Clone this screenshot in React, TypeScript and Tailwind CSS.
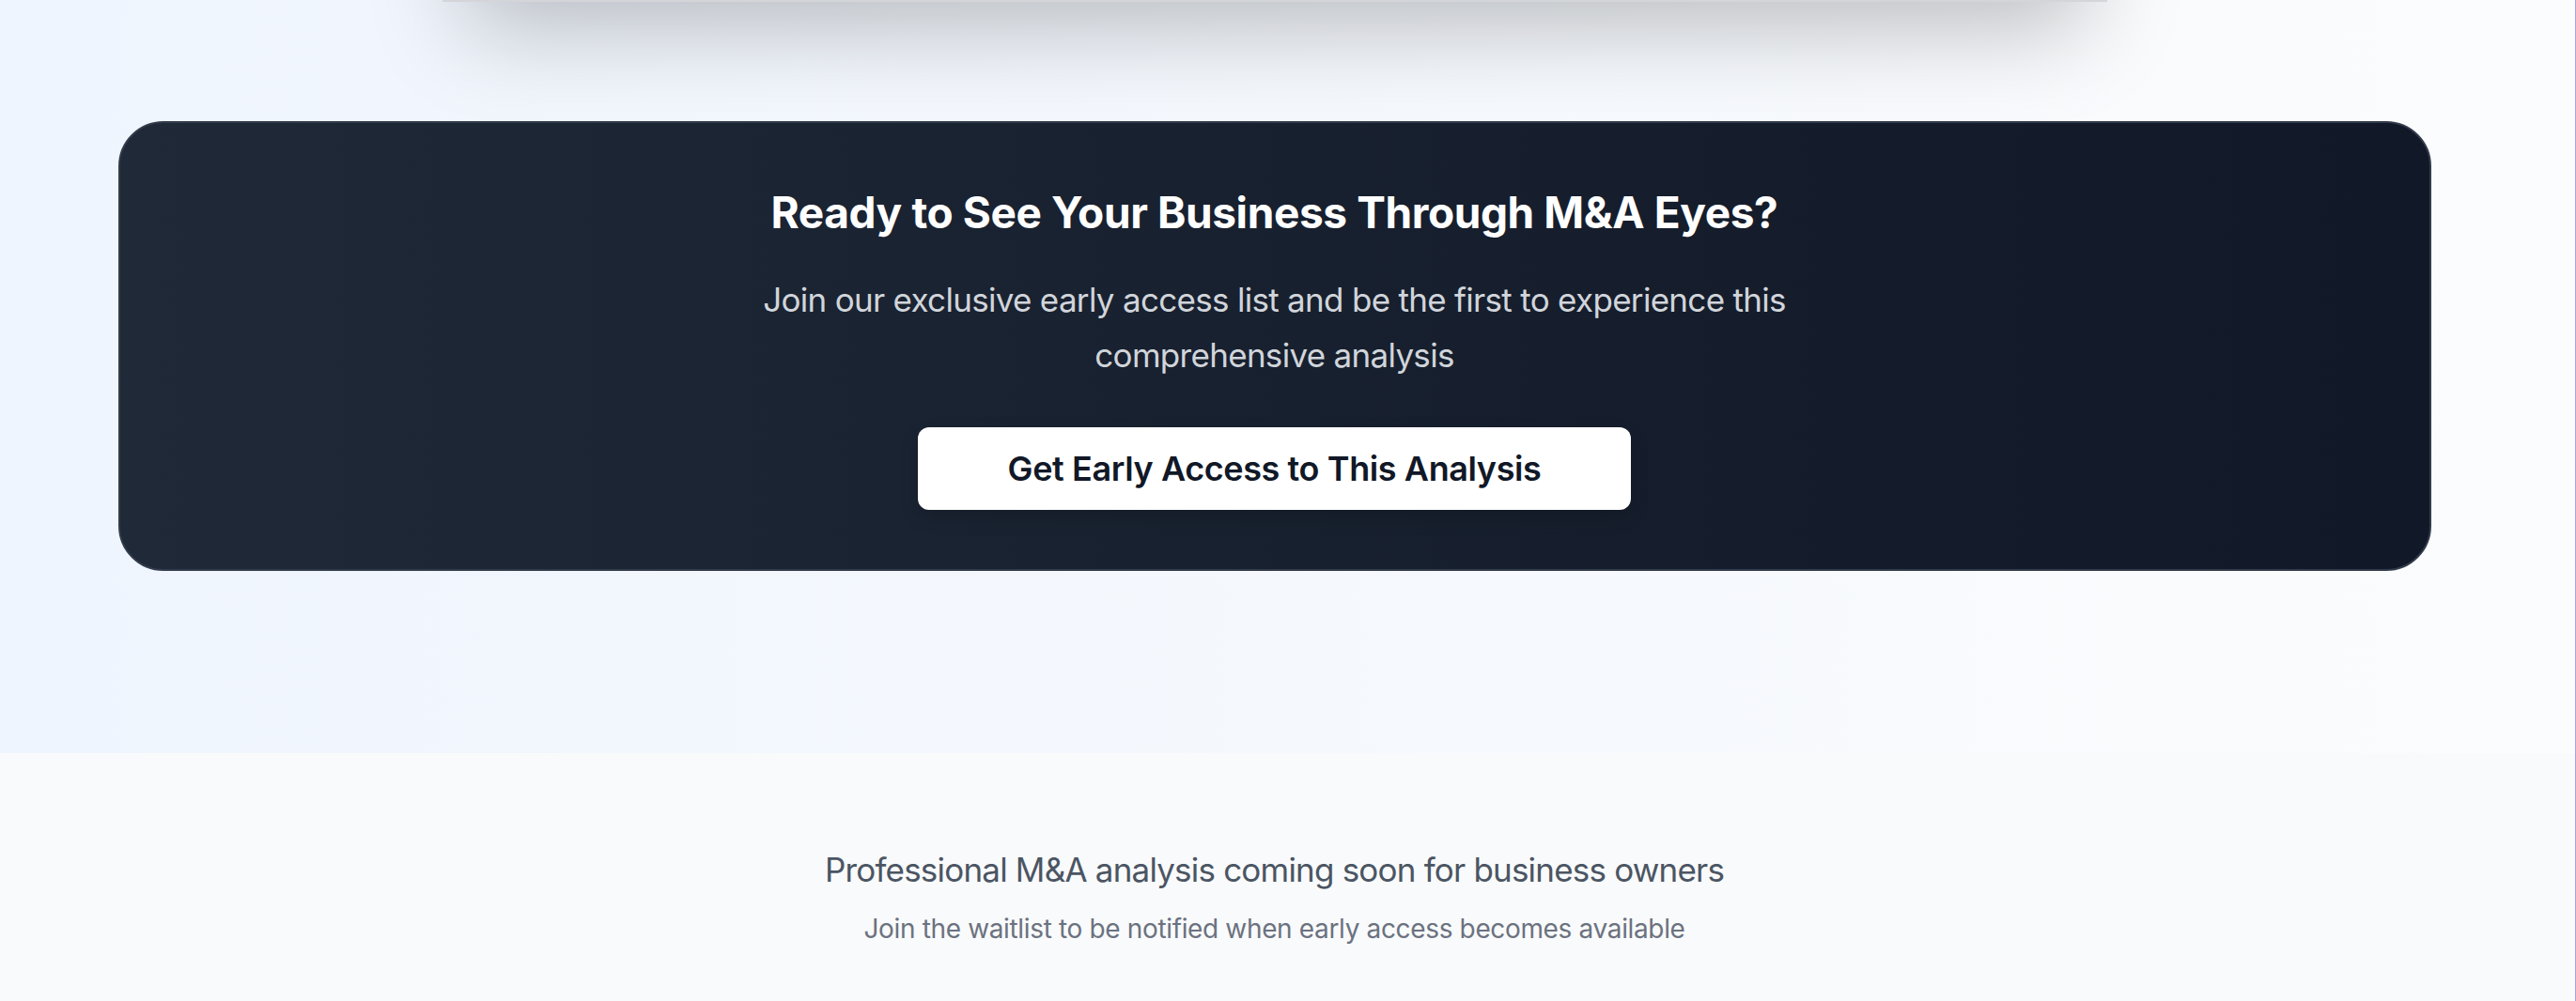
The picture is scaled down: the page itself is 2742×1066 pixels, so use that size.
export default function App() {
  return (
    <div className="min-h-screen w-full overflow-hidden border-r border-[#aa9fe6] font-['Inter','Liberation_Sans',sans-serif] antialiased">
      {/* CTA section */}
      <section className="bg-gradient-to-r from-[#eff5fe] to-[#fbfcfd] pr-[28px] pb-[194px]">
        {/* bottom edge of the card above */}
        <div className="mx-auto -mt-[298px] h-[300px] w-[1772px] border-b-2 border-[#d3d5d9] bg-white shadow-[0_50px_100px_-24px_rgba(0,0,0,0.25)]" />

        <div className="mx-auto mt-[127px] w-[2462px] rounded-[48px] border-2 border-[#323b4b] bg-gradient-to-r from-[#1f2937] to-[#111827] px-16 py-[63px] text-center">
          <h2 className="text-[46px] leading-[64px] font-bold tracking-[-0.4px] text-white">
            Ready to See Your Business Through M&amp;A Eyes?
          </h2>
          <p className="mx-auto mt-8 max-w-[1152px] text-[35px] leading-[58.5px] tracking-[-0.7px] text-[#d1d5db]">
            Join our exclusive early access list and be the first to experience this comprehensive
            analysis
          </p>
          <button className="mt-12 h-[88px] rounded-[12px] bg-white px-[96px] text-[36px] leading-[56px] font-semibold tracking-[-0.4px] text-[#111827] shadow-[0_8px_20px_rgba(0,0,0,0.15)]">
            Get Early Access to This Analysis
          </button>
        </div>
      </section>

      {/* Footer */}
      <footer className="bg-[#f9fafb] pr-[28px] py-[96px] text-center">
        <p className="text-[35px] leading-[56px] tracking-[-0.8px] text-[#4b5563]">
          Professional M&amp;A analysis coming soon for business owners
        </p>
        <p className="mt-[15px] text-[28px] leading-[40px] tracking-[-0.35px] text-[#6b7280]">
          Join the waitlist to be notified when early access becomes available
        </p>
      </footer>
    </div>
  )
}
